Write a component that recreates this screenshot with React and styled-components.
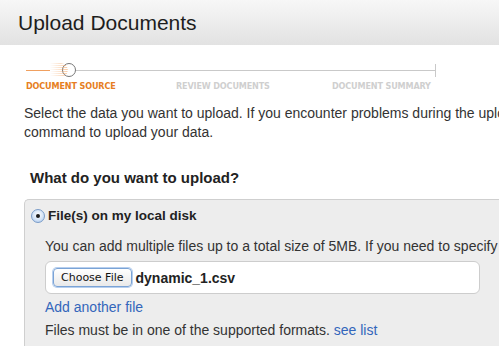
import React from "react";
import styled, { createGlobalStyle } from "styled-components";

const Global = createGlobalStyle`
  html, body { margin: 0; padding: 0; background: #fff; }
  body { font-family: "Liberation Sans", Arial, sans-serif; color: #333; overflow: hidden; }
  * { box-sizing: border-box; }
`;

const Page = styled.div`
  width: 499px;
  height: 346px;
  overflow: hidden;
  display: flex;
  flex-direction: column;
`;

const Header = styled.header`
  height: 45px;
  flex: none;
  background: linear-gradient(#f7f7f7, #e2e2e2);
  display: flex;
  align-items: center;
  padding-left: 18px;
`;

const Title = styled.h1`
  margin: 0;
  font-size: 21px;
  font-weight: normal;
  color: #1d1d1d;
  white-space: nowrap;
  padding-top: 1px;
`;

const Body = styled.div`
  padding: 0 0 0 24px;
  display: flex;
  flex-direction: column;
`;

const Stepper = styled.div`
  width: 410px;
  margin-left: 2px;
  margin-top: 18px;
  height: 30px;
`;

const Track = styled.div`
  height: 14px;
  display: flex;
  align-items: center;
`;

const Line = styled.div`
  height: 1px;
  flex: 1;
  background: #c9c9c9;
`;

const DoneLine = styled.div`
  width: 24px;
  height: 1px;
  background: #f0a060;
  flex: none;
`;

const Glow = styled.div`
  width: 18px;
  height: 14px;
  flex: none;
  background: repeating-linear-gradient(to bottom, rgba(245,160,90,0.55) 0 1px, rgba(255,255,255,0) 1px 2px);
  -webkit-mask: linear-gradient(to right, transparent, #000);
  mask: linear-gradient(to right, transparent, #000);
  border-radius: 0 7px 7px 0;
`;

const Dot = styled.div`
  width: 14px;
  height: 14px;
  flex: none;
  border-radius: 50%;
  border: 1.5px solid #777;
  background: #fff;
  margin-left: -6px;
`;

const EndTick = styled.div`
  width: 1px;
  height: 13px;
  background: #c9c9c9;
  flex: none;
`;

const Labels = styled.div`
  display: flex;
  margin-top: 4px;
  font-family: "DejaVu Sans Condensed", "Liberation Sans Narrow", sans-serif;
  font-size: 9px;
  font-weight: bold;
  letter-spacing: -0.15px;
  white-space: nowrap;
`;

const StepLabel = styled.span`
  color: ${p => (p.$active ? "#e67e22" : "#cfcfcf")};
  width: ${p => p.$w}px;
  flex: none;
`;

const Intro = styled.p`
  margin: 11px 0 0 0;
  font-size: 14px;
  line-height: 19px;
  color: #333;
  white-space: nowrap;
`;

const Question = styled.h2`
  margin: 27px 0 0 6px;
  font-size: 15px;
  line-height: 18px;
  font-weight: bold;
  color: #222;
  white-space: nowrap;
`;

const Panel = styled.div`
  margin-top: 12px;
  background: #ededed;
  border: 1px solid #cfcfcf;
  border-right: none;
  border-radius: 5px 0 0 0;
  padding: 7px 0 20px 6px;
  width: 500px;
`;

const OptionRow = styled.label`
  display: flex;
  align-items: center;
  gap: 3px;
  height: 16px;
  font-size: 13.5px;
  font-weight: bold;
  color: #222;
  white-space: nowrap;
`;

const Radio = styled.span`
  width: 14px;
  height: 14px;
  flex: none;
  border-radius: 50%;
  border: 1px solid #7a9cc8;
  background: radial-gradient(circle at 50% 40%, #ffffff 0%, #cfe0f5 60%, #9fc0ea 100%);
  display: flex;
  align-items: center;
  justify-content: center;
  margin-top: 2px;
  &::after {
    content: "";
    width: 4px;
    height: 4px;
    border-radius: 50%;
    background: #1b1b1b;
  }
`;

const Inner = styled.div`
  padding-left: 14px;
  display: flex;
  flex-direction: column;
`;

const Help = styled.p`
  margin: 15px 0 0 0;
  font-size: 14px;
  line-height: 17px;
  color: #333;
  white-space: nowrap;
`;

const FileBox = styled.div`
  margin-top: 6px;
  width: 435px;
  height: 33px;
  flex: none;
  background: #fff;
  border: 1px solid #cdcdcd;
  border-radius: 6px;
  display: flex;
  align-items: center;
  padding-left: 7px;
  gap: 4px;
`;

const ChooseButton = styled.button`
  height: 19px;
  padding: 0 7px;
  font-family: "DejaVu Sans", sans-serif;
  font-size: 11px;
  color: #111;
  background: linear-gradient(#ffffff, #e9e9e9);
  border: 1px solid #7aa3d6;
  border-radius: 4px;
  box-shadow: 0 0 0 1px #b7cfee;
  display: flex;
  align-items: center;
`;

const FileName = styled.span`
  font-size: 14px;
  font-weight: bold;
  color: #222;
`;

const Link = styled.a`
  color: #3366bb;
  text-decoration: none;
  font-weight: normal;
`;

const AddLink = styled(Link)`
  font-size: 14px;
  line-height: 17px;
  margin-top: 5px;
`;

const Note = styled.p`
  margin: 6px 0 0 0;
  font-size: 14px;
  line-height: 17px;
  color: #333;
  white-space: nowrap;
`;

export default function App() {
  return (
    <Page>
      <Global />
      <Header>
        <Title>Upload Documents</Title>
      </Header>
      <Body>
        <Stepper>
          <Track>
            <DoneLine />
            <Glow />
            <Dot />
            <Line />
            <EndTick />
          </Track>
          <Labels>
            <StepLabel $active $w={150}>DOCUMENT SOURCE</StepLabel>
            <StepLabel $w={156}>REVIEW DOCUMENTS</StepLabel>
            <StepLabel $w={110}>DOCUMENT SUMMARY</StepLabel>
          </Labels>
        </Stepper>
        <Intro>
          Select the data you want to upload. If you encounter problems during the upload, use the
          <br />
          command to upload your data.
        </Intro>
        <Question>What do you want to upload?</Question>
        <Panel>
          <OptionRow>
            <Radio />
            File(s) on my local disk
          </OptionRow>
          <Inner>
            <Help>You can add multiple files up to a total size of 5MB. If you need to specify more</Help>
            <FileBox>
              <ChooseButton>Choose File</ChooseButton>
              <FileName>dynamic_1.csv</FileName>
            </FileBox>
            <AddLink href="#">Add another file</AddLink>
            <Note>
              Files must be in one of the supported formats. <Link href="#">see list</Link>
            </Note>
          </Inner>
        </Panel>
      </Body>
    </Page>
  );
}
